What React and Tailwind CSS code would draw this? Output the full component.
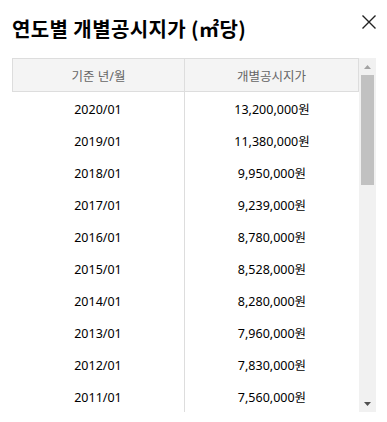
import React from "react";

const rows = [
  ["2020/01", "13,200,000원"],
  ["2019/01", "11,380,000원"],
  ["2018/01", "9,950,000원"],
  ["2017/01", "9,239,000원"],
  ["2016/01", "8,780,000원"],
  ["2015/01", "8,528,000원"],
  ["2014/01", "8,280,000원"],
  ["2013/01", "7,960,000원"],
  ["2012/01", "7,830,000원"],
  ["2011/01", "7,560,000원"],
];

export default function App() {
  return (
    <div className="w-[387px] h-[422px] bg-white overflow-hidden font-['Noto_Sans','Noto_Sans_CJK_KR',sans-serif] text-[#111]">
      <div className="flex items-start justify-between pl-3 pr-[11px] pt-[15px]">
        <h1 className="text-[20px] leading-[28px] mt-0 font-bold tracking-[0.4px] text-[#000] font-['Noto_Sans_CJK_KR',sans-serif]">
          연도별 개별공시지가 (㎡당)
        </h1>
        <button className="w-[14px] h-[14px] mt-0 flex items-center justify-center">
          <svg width="14" height="14" viewBox="0 0 14 14" fill="none">
            <path d="M0.5 0.5L13.5 13.5M13.5 0.5L0.5 13.5" stroke="#222" strokeWidth="1.4" />
          </svg>
        </button>
      </div>
      <div className="flex ml-3 mt-[15px] h-[354px]">
        <div className="w-[347px] h-full overflow-hidden">
          <div className="flex h-[34px] border border-[#dddddd] bg-[#f4f4f4] text-[12.5px] text-[#666]">
            <div className="w-[172px] pt-[4px] flex items-center justify-center border-r border-[#dddddd]">기준 년/월</div>
            <div className="flex-1 pt-[4px] flex items-center justify-center">개별공시지가</div>
          </div>
          {rows.map(([d, v]) => (
            <div key={d} className="flex h-[32px] text-[12.5px] text-[#000]">
              <div className="w-[173px] pt-[5px] flex items-center justify-center border-r border-[#dddddd]">{d}</div>
              <div className="flex-1 pt-[5px] flex items-center justify-center">{v}</div>
            </div>
          ))}
        </div>
        <div className="w-[17px] h-full bg-[#f1f1f1] flex flex-col items-center">
          <div className="h-[17px] w-full flex items-center justify-center">
            <svg width="7" height="4" viewBox="0 0 7 4"><path d="M3.5 0L7 4H0Z" fill="#a3a3a3" /></svg>
          </div>
          <div className="w-[13px] h-[110px] bg-[#c1c1c1]" />
          <div className="flex-1" />
          <div className="h-[17px] w-full flex items-center justify-center">
            <svg width="7" height="4" viewBox="0 0 7 4"><path d="M0 0H7L3.5 4Z" fill="#505050" /></svg>
          </div>
        </div>
      </div>
    </div>
  );
}
